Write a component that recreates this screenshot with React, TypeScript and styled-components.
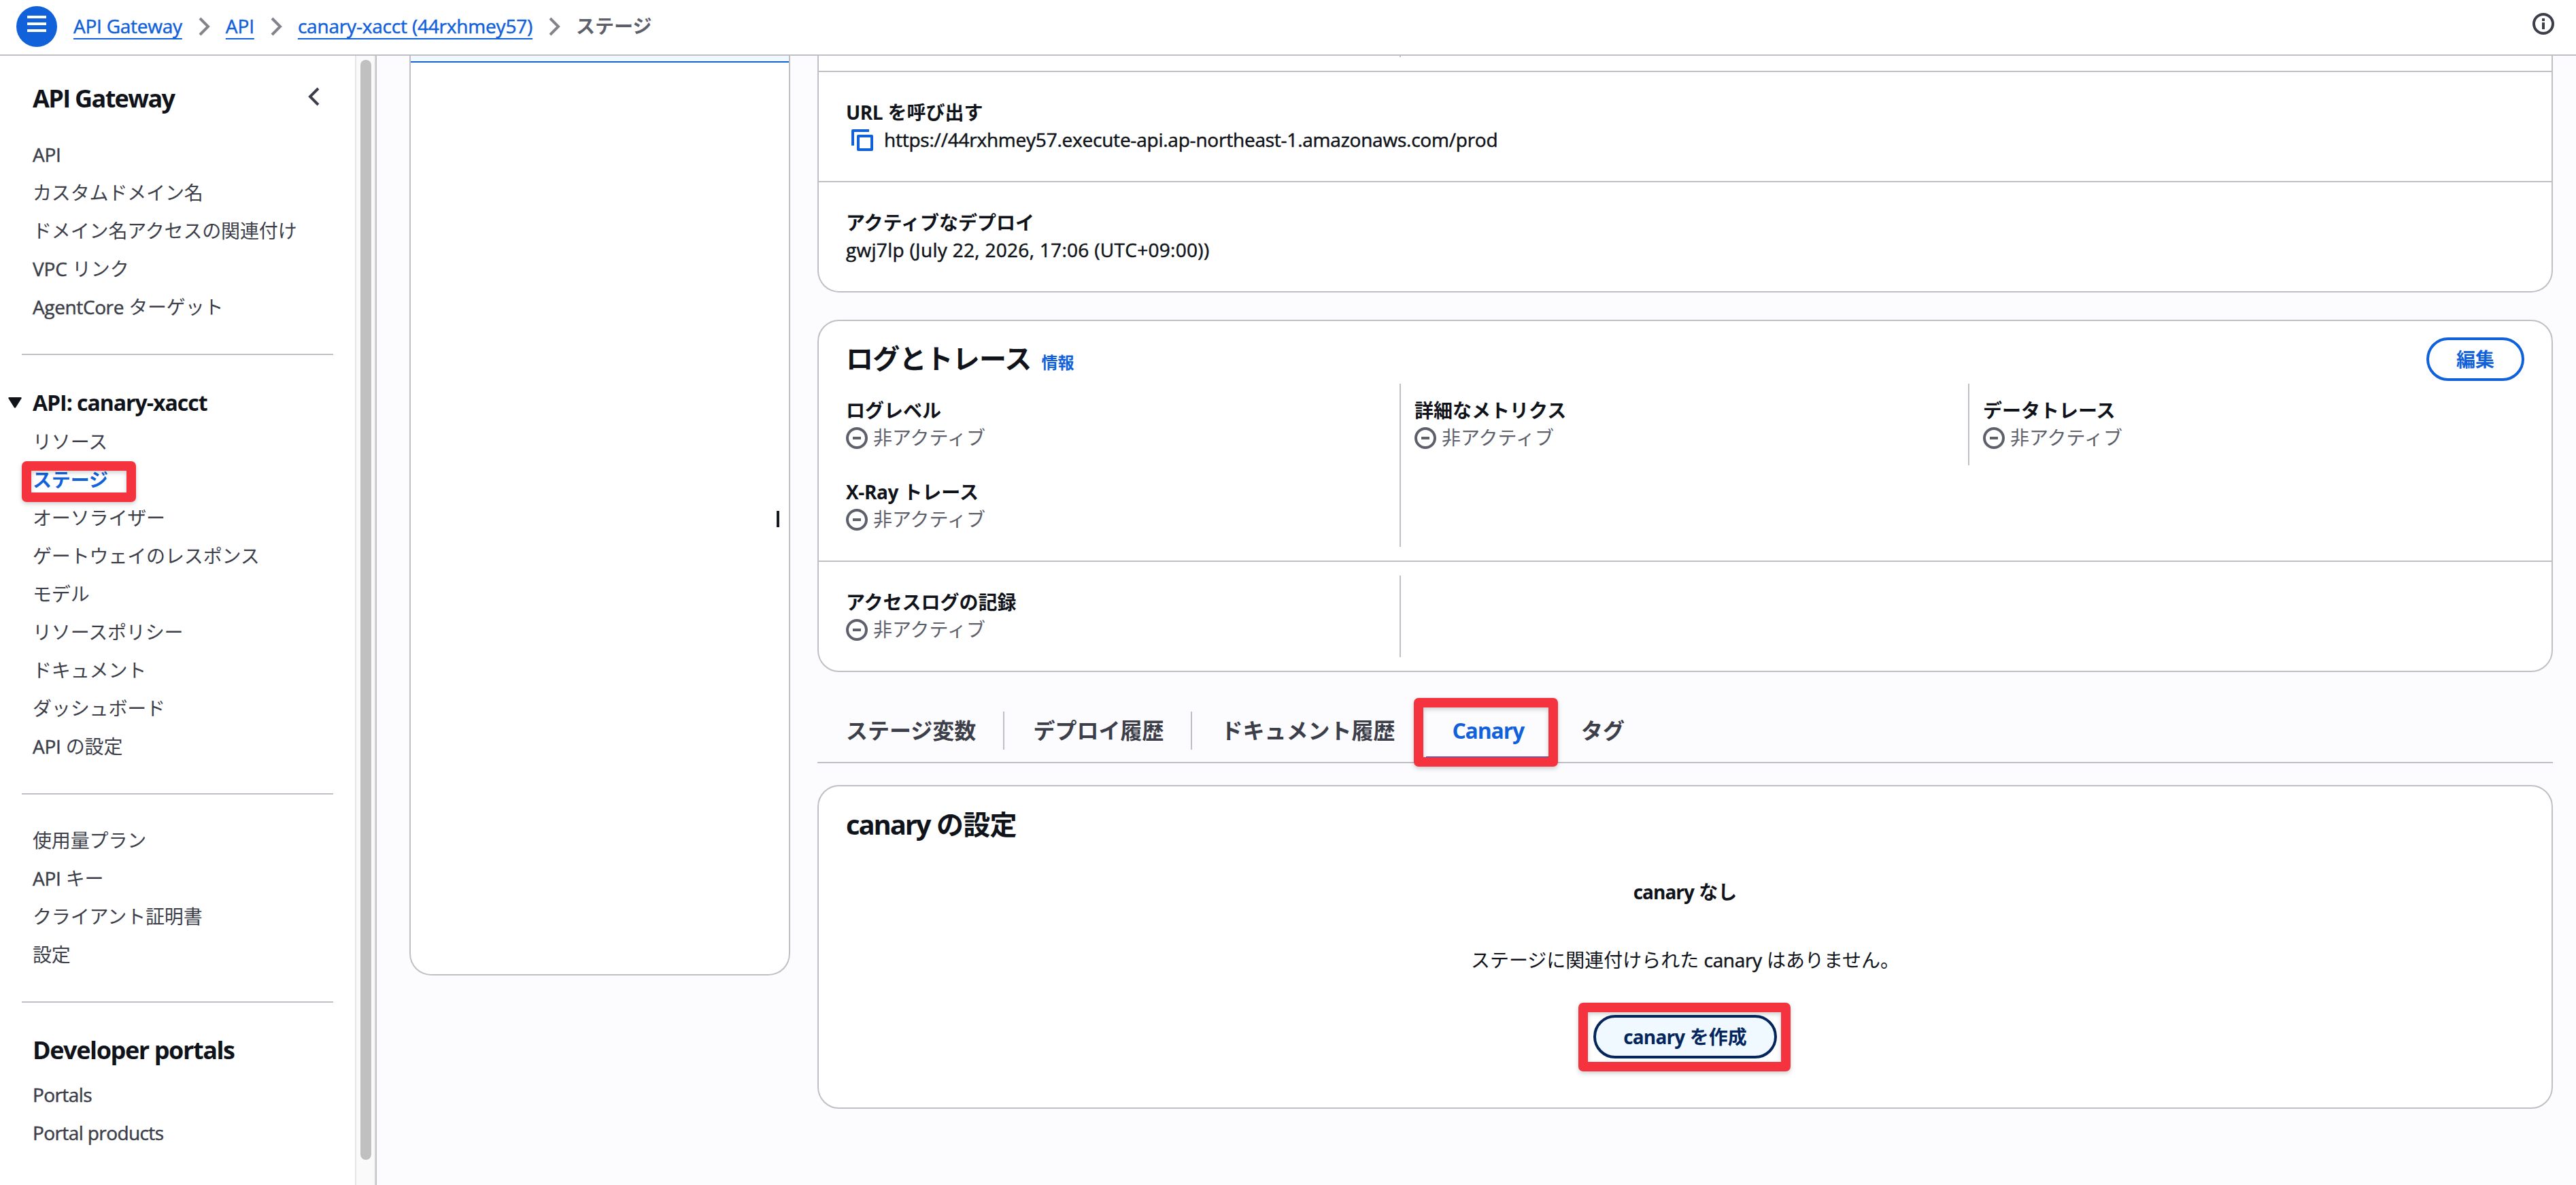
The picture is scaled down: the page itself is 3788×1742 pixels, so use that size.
import React from 'react';
import styled, { createGlobalStyle } from 'styled-components';

const LINE = '#bfbfc6';
const BLUE = '#1161db';
const INK = '#10141a';
const BODY = '#3c3f4a';
const MUTED = '#5d606b';

const Global = createGlobalStyle`
  * { box-sizing: border-box; }
  html, body { margin: 0; padding: 0; }
  body {
    font-family: "Open Sans", "Noto Sans CJK JP", sans-serif;
    font-size: 28px;
    line-height: 40px;
    color: ${INK};
    background: #fff;
  }
  ul, ol { list-style: none; margin: 0; padding: 0; }
  h1, h2, h3, p { margin: 0; font-size: inherit; font-weight: inherit; }
`;

const Page = styled.div`
  width: 3788px;
  height: 1742px;
  overflow: hidden;
  display: flex;
  flex-direction: column;
`;

/* ---------- text ---------- */

const Latin = styled.span<{ $track: number; $medium?: boolean }>`
  letter-spacing: ${p => p.$track}px;
  -webkit-text-stroke: ${p => (p.$medium ? '0.5px' : '0')} currentColor;
`;

const Mixed = ({ text, track, medium }: { text: string; track: number; medium?: boolean }) => (
  <>
    {text.split(/([\x21-\x7e]+(?: [\x21-\x7e]+)*)/).map((run, i) =>
      i % 2 ? <Latin key={i} $track={track} $medium={medium}>{run}</Latin> : run
    )}
  </>
);

/* ---------- icons ---------- */

const Icon = styled.svg`
  width: 32px;
  height: 32px;
  flex: none;
  display: block;
  fill: none;
`;

const ChevronRight = () => (
  <Icon viewBox="0 0 32 32" stroke="#83838c" strokeWidth="4">
    <path d="M10 4L22 16L10 28" />
  </Icon>
);

const ChevronLeft = () => (
  <Icon viewBox="0 0 32 32" stroke={BODY} strokeWidth="4">
    <path d="M22 4L10 16L22 28" />
  </Icon>
);

const InfoIcon = () => (
  <Icon viewBox="0 0 32 32" stroke={BODY} strokeWidth="4">
    <circle cx="16" cy="16" r="14" />
    <path d="M16 8V12M16 14V24" />
  </Icon>
);

const InactiveIcon = () => (
  <Icon viewBox="0 0 32 32" stroke={MUTED} strokeWidth="4">
    <circle cx="16" cy="16" r="14" />
    <path d="M10 16H22" />
  </Icon>
);

const CopyIcon = () => (
  <Icon viewBox="0 0 32 32" stroke={BLUE} strokeWidth="4" strokeLinejoin="round">
    <path d="M26 2H2V24" />
    <rect x="10" y="10" width="20" height="20" />
  </Icon>
);

/* ---------- top bar ---------- */

const TopBar = styled.header`
  height: 82px;
  flex: none;
  border-bottom: 2px solid ${LINE};
  display: flex;
  align-items: flex-start;
  padding: 9px 32px 0 24px;
`;

const MenuButton = styled.div`
  width: 60px;
  height: 60px;
  border-radius: 50%;
  background: ${BLUE};
  display: flex;
  flex-direction: column;
  align-items: center;
  gap: 6px;
  padding-top: 14px;
`;

const MenuBar = styled.span`
  width: 28px;
  height: 4px;
  background: #fff;
`;

const Breadcrumbs = styled.ol`
  display: flex;
  align-items: flex-start;
  gap: 16px;
  margin: 9px 0 0 24px;
  flex: 1;

  svg { margin-top: 5px; }
`;

const Crumb = styled.a`
  color: ${BLUE};
  text-decoration: underline;
  text-decoration-thickness: 2px;
  text-underline-offset: 7px;
  text-decoration-skip-ink: none;
  white-space: nowrap;
`;

const CurrentCrumb = styled.span`
  color: ${MUTED};
  font-weight: 600;
`;

const InfoSlot = styled.div`
  padding-top: 10px;
`;

/* ---------- sidebar ---------- */

const Body = styled.div`
  flex: 1;
  min-height: 0;
  display: flex;
`;

const Sidebar = styled.aside`
  width: 554px;
  flex: none;
  display: flex;
  border-right: 2px solid ${LINE};
`;

const Nav = styled.nav`
  width: 522px;
  padding-top: 41px;
`;

const NavHeader = styled.div`
  display: flex;
  justify-content: space-between;
  padding: 0 44px 0 48px;
  margin-bottom: 40px;

  svg { margin-top: 3px; }
`;

const NavHeading = styled.h2`
  font-size: 36px;
  line-height: 44px;
  font-weight: 700;
`;

const NavList = styled.ul`
  display: flex;
  flex-direction: column;
  gap: 16px;
  padding-left: 48px;
`;

const NavItem = styled.li<{ $active?: boolean }>`
  position: relative;
  height: 40px;
  width: max-content;
  letter-spacing: -0.15px;
  color: ${p => (p.$active ? BLUE : BODY)};
  font-weight: ${p => (p.$active ? 700 : 400)};
`;

const Divider = styled.hr<{ $after: number }>`
  height: 2px;
  border: 0;
  background: ${LINE};
  margin: 49px 32px ${p => p.$after}px;
`;

const GroupHeader = styled.div`
  display: flex;
  gap: 16px;
  padding-left: 12px;
  margin-bottom: 17px;
`;

const Caret = styled.svg`
  width: 20px;
  height: 16px;
  margin-top: 12px;
  fill: ${INK};
`;

const GroupTitle = styled.h3`
  font-size: 32px;
  line-height: 40px;
  font-weight: 700;
`;

const PortalHeading = styled(NavHeading)`
  padding-left: 48px;
  margin-bottom: 23px;
`;

const ScrollTrack = styled.div`
  width: 30px;
  padding: 6px 4px 0 6px;
  background: #fafafa;
  border-left: 2px solid #e5e5e5;
  border-right: 2px solid #ececec;
`;

const ScrollThumb = styled.div`
  width: 16px;
  height: 1617px;
  border-radius: 8px;
  background: #c0c0c0;
`;

/* ---------- main ---------- */

const Main = styled.main`
  flex: 1;
  background: #fcfcfe;
  display: flex;
  align-items: flex-start;
  gap: 40px;
  padding: 0 34px 0 48px;
`;

const StagePanel = styled.section`
  width: 560px;
  height: 1352px;
  flex: none;
  background: #fff;
  border: 2px solid ${LINE};
  border-top: 0;
  border-radius: 0 0 32px 32px;
  display: flex;
  flex-direction: column;
`;

const SelectedRow = styled.div`
  height: 10px;
  background: #eff9ff;
  border-bottom: 2px solid ${BLUE};
`;

const PanelBody = styled.div`
  flex: 1;
  display: flex;
  justify-content: flex-end;
  padding: 659px 14px 0 0;
`;

const ResizeHandle = styled.span`
  width: 4px;
  height: 24px;
  background: #16191f;
`;

const Details = styled.div`
  flex: 1;
  display: flex;
  flex-direction: column;
`;

const Card = styled.section`
  background: #fff;
  border: 2px solid ${LINE};
  border-radius: 32px;
`;

const ClippedCard = styled(Card)`
  border-top: 0;
  border-radius: 0 0 32px 32px;
  margin-bottom: 40px;
`;

const ClippedRow = styled.div`
  height: 22px;
  padding-left: 854px;
`;

const ClippedRule = styled.div`
  width: 2px;
  height: 2px;
  background: ${LINE};
`;

const Field = styled.div`
  border-top: 2px solid ${LINE};
  height: 162px;
  padding: 39px 40px 0;
`;

const Label = styled.h3`
  font-weight: 700;
`;

const CopyRow = styled.div`
  display: flex;
  gap: 16px;
  padding-left: 8px;

  svg { margin-top: 5px; }
`;

const CardHeader = styled.div`
  height: 92px;
  padding: 24px 40px 0;
  display: flex;
  justify-content: space-between;
`;

const TitleGroup = styled.div`
  display: flex;
  align-items: baseline;
  gap: 15px;
  padding-top: 7px;
  height: 56px;
`;

const Title = styled.h2`
  font-size: 40px;
  line-height: 48px;
  font-weight: 700;
  letter-spacing: -0.8px;
`;

const InfoLink = styled.a`
  font-size: 24px;
  line-height: 32px;
  font-weight: 700;
  color: ${BLUE};
`;

const Button = styled.button<{ $hover?: boolean }>`
  position: relative;
  height: 64px;
  border: 4px solid ${p => (p.$hover ? '#04265c' : BLUE)};
  border-radius: 32px;
  background: ${p => (p.$hover ? '#eff9ff' : '#fff')};
  color: ${p => (p.$hover ? '#04265c' : BLUE)};
  font: inherit;
  font-weight: 700;
  padding: 0 40px;
`;

const Columns = styled.div`
  display: grid;
  grid-template-columns: repeat(3, 836px);
  align-items: start;
  padding-left: 18px;
`;

const LogColumns = styled(Columns)`
  padding-bottom: 20px;
`;

const AccessColumns = styled(Columns)`
  border-top: 2px solid ${LINE};
  padding-top: 20px;
  padding-bottom: 20px;
`;

const Column = styled.div<{ $rule?: boolean; $rows?: number }>`
  height: ${p => (p.$rows ?? 1) * 120}px;
  border-left: 2px solid ${p => (p.$rule ? LINE : 'transparent')};
  padding-left: 20px;
`;

const Metric = styled.div`
  height: 120px;
  padding-top: 19px;
`;

const Status = styled.div`
  display: flex;
  gap: 8px;
  color: ${MUTED};

  svg { margin-top: 5px; }
`;

const Tabs = styled.div`
  display: flex;
  margin: 40px 0 32px;
  height: 94px;
  border-bottom: 2px solid ${LINE};
`;

const Tab = styled.div<{ $active?: boolean }>`
  position: relative;
  height: 92px;
  padding: 26px 40px 0 42px;
  font-size: 32px;
  line-height: 40px;
  font-weight: 700;
  white-space: nowrap;
  color: ${p => (p.$active ? BLUE : BODY)};
`;

const TabRule = styled.span`
  width: 2px;
  height: 56px;
  margin-top: 18px;
  background: ${LINE};
`;

const TabUnderline = styled.span`
  position: absolute;
  left: 4px;
  right: 4px;
  bottom: 0;
  height: 8px;
  background: ${BLUE};
`;

const CanaryHeader = styled.div`
  padding: 32px 40px 0;
`;

const Empty = styled.div`
  height: 392px;
  padding-top: 55px;
  display: flex;
  flex-direction: column;
  align-items: center;
`;

const EmptyText = styled.p`
  margin: 60px 0 61px;
`;

const Marker = styled.span<{ $x: number; $y: number; $w: number; $h: number }>`
  position: absolute;
  left: ${p => p.$x}px;
  top: ${p => p.$y}px;
  width: ${p => p.$w}px;
  height: ${p => p.$h}px;
  border: 14px solid #f5333f;
  border-radius: 7px;
  filter: drop-shadow(0 3px 3px rgba(0, 0, 0, 0.18));
  z-index: 1;
`;

/* ---------- content ---------- */

const gatewayLinks: [string, number][] = [
  ['API', -0.32],
  ['カスタムドメイン名', 0],
  ['ドメイン名アクセスの関連付け', 0],
  ['VPC リンク', -0.1],
  ['AgentCore ターゲット', -0.38],
];

const apiLinks = [
  'リソース', 'ステージ', 'オーソライザー', 'ゲートウェイのレスポンス', 'モデル',
  'リソースポリシー', 'ドキュメント', 'ダッシュボード', 'API の設定',
];

const accountLinks = ['使用量プラン', 'API キー', 'クライアント証明書', '設定'];

const portalLinks = ['Portals', 'Portal products'];

const StatusMetric = ({ label }: { label: string }) => (
  <Metric>
    <Label><Mixed text={label} track={-0.4} /></Label>
    <Status><InactiveIcon />非アクティブ</Status>
  </Metric>
);

export default function App() {
  return (
    <Page lang="ja">
      <Global />
      <TopBar>
        <MenuButton><MenuBar /><MenuBar /><MenuBar /></MenuButton>
        <Breadcrumbs>
          <Crumb><Latin $medium $track={-0.25}>API Gateway</Latin></Crumb>
          <ChevronRight />
          <Crumb><Latin $medium $track={-0.1}>API</Latin></Crumb>
          <ChevronRight />
          <Crumb><Latin $medium $track={-0.19}>canary-xacct (44rxhmey57)</Latin></Crumb>
          <ChevronRight />
          <CurrentCrumb>ステージ</CurrentCrumb>
        </Breadcrumbs>
        <InfoSlot><InfoIcon /></InfoSlot>
      </TopBar>

      <Body>
        <Sidebar>
          <Nav>
            <NavHeader>
              <NavHeading><Latin $track={-1.65}>API Gateway</Latin></NavHeading>
              <ChevronLeft />
            </NavHeader>
            <NavList>
              {gatewayLinks.map(([text, track]) => (
                <NavItem key={text}><Mixed medium text={text} track={track} /></NavItem>
              ))}
            </NavList>
            <Divider $after={50} />
            <GroupHeader>
              <Caret viewBox="0 0 20 16"><path d="M1.5 0H18.5Q20.6 0.4 19.4 2L11.2 15Q10 16.6 8.8 15L0.6 2Q-0.6 0.4 1.5 0Z" /></Caret>
              <GroupTitle><Latin $track={-1.03}>API: canary-xacct</Latin></GroupTitle>
            </GroupHeader>
            <NavList>
              {apiLinks.map(text => (
                <NavItem key={text} $active={text === 'ステージ'}>
                  <Mixed medium text={text} track={-0.25} />
                  {text === 'ステージ' && <Marker $x={-16} $y={-7} $w={168} $h={60} />}
                </NavItem>
              ))}
            </NavList>
            <Divider $after={47} />
            <NavList>
              {accountLinks.map(text => (
                <NavItem key={text}><Mixed medium text={text} track={-0.25} /></NavItem>
              ))}
            </NavList>
            <Divider $after={48} />
            <PortalHeading><Latin $track={-1.4}>Developer portals</Latin></PortalHeading>
            <NavList>
              {portalLinks.map(text => (
                <NavItem key={text}><Latin $medium $track={-0.6}>{text}</Latin></NavItem>
              ))}
            </NavList>
          </Nav>
          <ScrollTrack><ScrollThumb /></ScrollTrack>
        </Sidebar>

        <Main>
          <StagePanel>
            <SelectedRow />
            <PanelBody><ResizeHandle /></PanelBody>
          </StagePanel>

          <Details>
            <ClippedCard>
              <ClippedRow><ClippedRule /></ClippedRow>
              <Field>
                <Label><Mixed text="URL を呼び出す" track={-0.45} /></Label>
                <CopyRow>
                  <CopyIcon />
                  <Latin $medium $track={-0.225}>https://44rxhmey57.execute-api.ap-northeast-1.amazonaws.com/prod</Latin>
                </CopyRow>
              </Field>
              <Field>
                <Label>アクティブなデプロイ</Label>
                <Latin $medium $track={0.3}>gwj7lp (July 22, 2026, 17:06 (UTC+09:00))</Latin>
              </Field>
            </ClippedCard>

            <Card>
              <CardHeader>
                <TitleGroup>
                  <Title>ログとトレース</Title>
                  <InfoLink>情報</InfoLink>
                </TitleGroup>
                <Button>編集</Button>
              </CardHeader>
              <LogColumns>
                <Column $rows={2}>
                  <StatusMetric label="ログレベル" />
                  <StatusMetric label="X-Ray トレース" />
                </Column>
                <Column $rule $rows={2}><StatusMetric label="詳細なメトリクス" /></Column>
                <Column $rule><StatusMetric label="データトレース" /></Column>
              </LogColumns>
              <AccessColumns>
                <Column><StatusMetric label="アクセスログの記録" /></Column>
                <Column $rule />
              </AccessColumns>
            </Card>

            <Tabs>
              <Tab>ステージ変数</Tab>
              <TabRule />
              <Tab>デプロイ履歴</Tab>
              <TabRule />
              <Tab>ドキュメント履歴</Tab>
              <TabRule />
              <Tab $active>
                <Latin $track={-1.2}>Canary</Latin>
                <TabUnderline />
                <Marker $x={-14} $y={-2} $w={212} $h={101} />
              </Tab>
              <TabRule />
              <Tab>タグ</Tab>
            </Tabs>

            <Card>
              <CanaryHeader>
                <Title><Mixed text="canary の設定" track={-2.1} /></Title>
              </CanaryHeader>
              <Empty>
                <Label><Mixed text="canary なし" track={-1} /></Label>
                <EmptyText><Mixed medium text="ステージに関連付けられた canary はありません。" track={-0.35} /></EmptyText>
                <Button $hover>
                  <Mixed text="canary を作成" track={-0.85} />
                  <Marker $x={-26} $y={-22} $w={312} $h={101} />
                </Button>
              </Empty>
            </Card>
          </Details>
        </Main>
      </Body>
    </Page>
  );
}
